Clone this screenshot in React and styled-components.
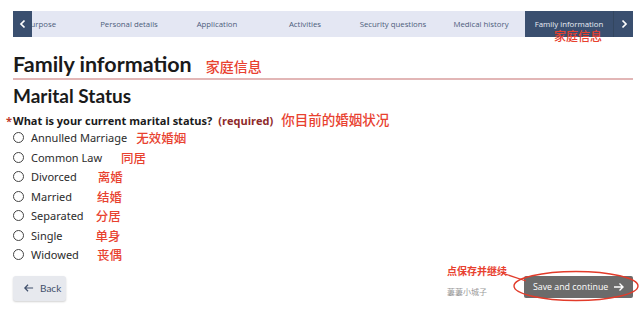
import React from "react";
import styled, { createGlobalStyle } from "styled-components";

const Global = createGlobalStyle`
  html, body { margin: 0; padding: 0; background: #fff; }
  body { width: 640px; height: 313px; overflow: hidden; font-family: "Open Sans", "Noto Sans", sans-serif; }
`;

const Page = styled.div`
  padding: 11px 7px 0 13px;
  position: relative;
  height: 313px;
  box-sizing: border-box;
`;

const TabBar = styled.nav`
  position: relative;
  display: flex;
  height: 26px;
  background: #e4e7f3;
  overflow: hidden;
`;

const Track = styled.div`
  display: flex;
  margin-left: -16px;
  flex: 1;
`;

const Tab = styled.div`
  flex: 0 0 88px;
  display: flex;
  align-items: center;
  justify-content: center;
  font-size: 7.8px;
  white-space: nowrap;
  color: ${(p) => (p.$active ? "#e9edf5" : "#4d5d7b")};
  background: ${(p) => (p.$active ? "#3a4f6f" : "transparent")};
`;

const Arrow = styled.div`
  width: 19px;
  height: 26px;
  background: #3a4f6f;
  display: flex;
  align-items: center;
  justify-content: center;
  flex: 0 0 19px;
  ${(p) => (p.$left ? "position: absolute; left: 0; top: 0; z-index: 1;" : "border-left: 1px solid #33465f;")}
`;

const CJK = styled.span`
  font-family: "Noto Sans CJK SC", sans-serif;
  color: #e8412f;
  font-weight: 500;
  font-size: ${(p) => p.$size || 14}px;
  margin-left: ${(p) => p.$ml || 0}px;
  white-space: nowrap;
`;

const TabNote = styled(CJK)`
  position: absolute;
  left: 554px;
  top: 27px;
`;

const TitleRow = styled.div`
  display: flex;
  align-items: baseline;
  margin-top: 13px;
  border-bottom: 2px solid #e2b6b6;
`;

const H1 = styled.h1`
  margin: 0;
  font-family: Lato, sans-serif;
  font-weight: 700;
  font-size: 21.5px;
  line-height: 28px;
  color: #1a1a1a;
`;

const H2 = styled.h2`
  margin: 5px 0 0;
  font-family: Lato, sans-serif;
  font-weight: 700;
  font-size: 19px;
  line-height: 22px;
  color: #1a1a1a;
`;

const Question = styled.div`
  display: flex;
  align-items: baseline;
  margin-top: 2px;
  font-size: 11px;
  line-height: 20px;
  font-weight: 700;
  color: #1a1a1a;
  position: relative;
`;

const Star = styled.span`
  position: absolute;
  left: -7px;
  top: 2px;
  color: #c0392b;
  font-size: 11px;
`;

const Req = styled.span`
  color: #8e2a2a;
  margin-left: 6px;
`;

const Options = styled.div`
  display: flex;
  flex-direction: column;
  margin-top: -3px;
`;

const Option = styled.label`
  display: flex;
  align-items: center;
  height: 19.5px;
  font-size: 11px;
  color: #2b2b2b;
  font-family: "Noto Sans", "Open Sans", sans-serif;
`;

const Radio = styled.span`
  width: 9px;
  height: 9px;
  border: 1.3px solid #444;
  border-radius: 50%;
  margin-right: 7px;
  flex: 0 0 auto;
`;

const Footer = styled.div`
  display: flex;
  justify-content: space-between;
  align-items: center;
  margin-top: 11px;
`;

const BackButton = styled.button`
  display: flex;
  align-items: center;
  gap: 6px;
  height: 25px;
  width: 53px;
  padding: 0 0 0 10px;
  border: none;
  border-radius: 3px;
  background: #e7e9ee;
  box-shadow: 0 1px 2px rgba(0,0,0,0.18);
  font-family: Lato, sans-serif;
  font-size: 10px;
  color: #3f4f6b;
`;

const Right = styled.div`
  display: flex;
  align-items: center;
  position: relative;
`;

const SaveButton = styled.button`
  display: flex;
  align-items: center;
  gap: 5px;
  height: 22px;
  width: 109px;
  padding: 0 0 0 9px;
  border: none;
  border-radius: 2px;
  background: #6b6b6b;
  color: #fff;
  font-family: "Open Sans", sans-serif;
  font-size: 8.8px;
  white-space: nowrap;
  margin-bottom: 2px;
`;

const Ellipse = styled.svg`
  position: absolute;
  left: -12px;
  top: -7px;
  pointer-events: none;
  overflow: visible;
`;

const Note = styled(CJK)`
  position: absolute;
  left: -77px;
  top: -13px;
  font-weight: 700;
`;

const Watermark = styled.span`
  position: absolute;
  left: -77px;
  top: 10px;
  font-family: "Noto Sans CJK SC", sans-serif;
  font-size: 8px;
  color: #9a9a9a;
  white-space: nowrap;
`;

const Chevron = ({ dir }) => (
  <svg width="8" height="10" viewBox="0 0 8 10">
    <path
      d={dir === "left" ? "M5.5 1.5 L2 5 L5.5 8.5" : "M2.5 1.5 L6 5 L2.5 8.5"}
      stroke="#fff"
      strokeWidth="1.7"
      fill="none"
    />
  </svg>
);

const tabs = ["Purpose", "Personal details", "Application", "Activities", "Security questions", "Medical history", "Family information"];

const options = [
  ["Annulled Marriage", "无效婚姻", 9],
  ["Common Law", "同居", 19],
  ["Divorced", "离婚", 21],
  ["Married", "结婚", 25],
  ["Separated", "分居", 12],
  ["Single", "单身", 33],
  ["Widowed", "丧偶", 18],
];

export default function App() {
  return (
    <>
      <Global />
      <Page>
        <TabBar>
          <Arrow $left><Chevron dir="left" /></Arrow>
          <Track>
            {tabs.map((t, i) => (
              <Tab key={t} $active={i === tabs.length - 1}>{t}</Tab>
            ))}
          </Track>
          <Arrow><Chevron dir="right" /></Arrow>
        </TabBar>
        <TabNote $size={12}>家庭信息</TabNote>

        <TitleRow>
          <H1>Family information</H1>
          <CJK $ml={14} $size={14}>家庭信息</CJK>
        </TitleRow>
        <H2>Marital Status</H2>
        <Question>
          <Star>*</Star>
          What is your current marital status?
          <Req>(required)</Req>
          <CJK $ml={8} $size={13.5}>你目前的婚姻状况</CJK>
        </Question>
        <Options>
          {options.map(([label, cn, ml]) => (
            <Option key={label}>
              <Radio />
              {label}
              <CJK $ml={ml} $size={12.5}>{cn}</CJK>
            </Option>
          ))}
        </Options>
        <Footer>
          <BackButton>
            <svg width="11" height="10" viewBox="0 0 12 10">
              <path d="M11 5 H2 M5.5 1.5 L2 5 L5.5 8.5" stroke="#3f4f6b" strokeWidth="1.3" fill="none" />
            </svg>
            Back
          </BackButton>
          <Right>
            <Note $size={10}>点保存并继续</Note>
            <Watermark>萋萋小城子</Watermark>
            <SaveButton>
              Save and continue
              <svg width="12" height="10" viewBox="0 0 12 10">
                <path d="M1 5 H10 M6.5 1.5 L10 5 L6.5 8.5" stroke="#fff" strokeWidth="1.4" fill="none" />
              </svg>
            </SaveButton>
            <Ellipse width="128" height="34" viewBox="0 0 128 34">
              <ellipse cx="64" cy="17" rx="62" ry="14.5" stroke="#e23b2a" strokeWidth="1.4" fill="none" />
              <path d="M-10 4 L14 12" stroke="#e23b2a" strokeWidth="1.2" />
            </Ellipse>
          </Right>
        </Footer>
      </Page>
    </>
  );
}
